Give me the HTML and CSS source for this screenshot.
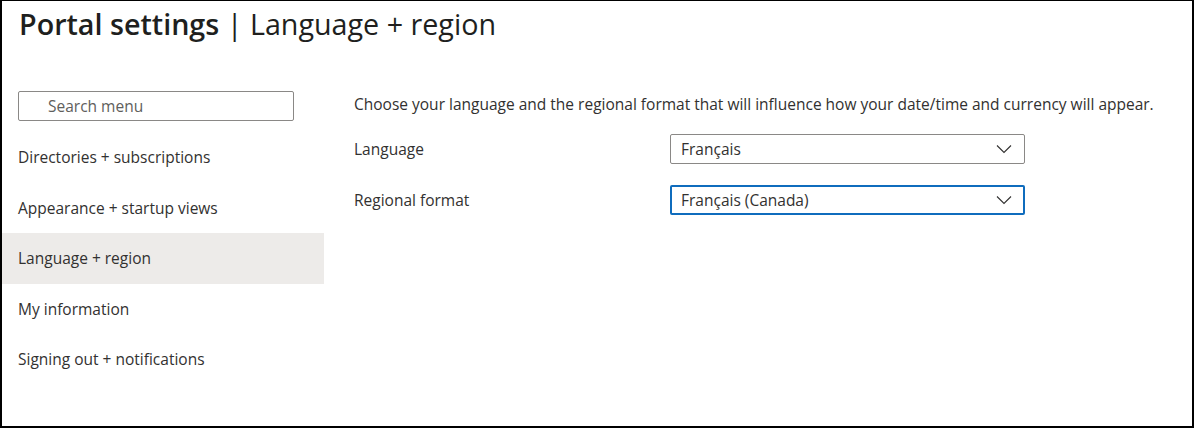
FILE: index.html
```html
<!DOCTYPE html>
<html lang="en">
<head>
<meta charset="utf-8">
<title>Portal settings | Language + region</title>
<link rel="stylesheet" href="styles.css">
</head>
<body>
<div class="frame">
  <header class="header">
    <h1 class="title"><span class="title-main">Portal settings</span> | Language + region</h1>
  </header>
  <div class="layout">
    <nav class="sidebar">
      <div class="search">
        <span class="search-placeholder">Search menu</span>
      </div>
      <ul class="menu">
        <li class="menu-item">Directories + subscriptions</li>
        <li class="menu-item">Appearance + startup views</li>
        <li class="menu-item is-selected">Language + region</li>
        <li class="menu-item">My information</li>
        <li class="menu-item">Signing out + notifications</li>
      </ul>
    </nav>
    <main class="content">
      <p class="intro">Choose your language and the regional format that will influence how your date/time and currency will appear.</p>
      <div class="field">
        <label class="field-label">Language</label>
        <div class="dropdown">
          <span class="dropdown-value">Français</span>
          <svg class="chevron" width="16" height="10" viewBox="0 0 16 10"><path d="M1 1.5 L8 8.5 L15 1.5" fill="none" stroke="#323130" stroke-width="1.1"/></svg>
        </div>
      </div>
      <div class="field">
        <label class="field-label">Regional format</label>
        <div class="dropdown is-focused">
          <span class="dropdown-value">Français (Canada)</span>
          <svg class="chevron" width="16" height="10" viewBox="0 0 16 10"><path d="M1 1.5 L8 8.5 L15 1.5" fill="none" stroke="#323130" stroke-width="1.1"/></svg>
        </div>
      </div>
    </main>
  </div>
</div>
</body>
</html>
```

FILE: styles.css
```css
* { box-sizing: border-box; }
html, body { margin: 0; padding: 0; background: #fff; }
body {
  font-family: "Open Sans", "Noto Sans", sans-serif;
  color: #323130;
}
.frame {
  width: 1194px;
  height: 428px;
  border-style: solid;
  border-color: #000;
  border-width: 1px 2px 2px 2px;
  background: #fff;
  overflow: hidden;
}
.header { padding: 3px 0 0 17px; height: 90px; }
.title {
  margin: 0;
  font-size: 28.7px;
  font-weight: 400;
  line-height: 40px;
  color: #201f1e;
}
.title-main { font-weight: 600; }
.layout { display: grid; grid-template-columns: 322px 1fr; }
.sidebar { display: flex; flex-direction: column; }
.search {
  margin-left: 16px;
  width: 276px;
  height: 30px;
  border: 1px solid #8a8886;
  border-radius: 2px;
  padding-left: 29px;
  display: flex;
  align-items: center;
}
.search-placeholder { font-size: 15.5px; color: #605e5c; }
.menu { list-style: none; margin: 11px 0 0; padding: 0; }
.menu-item {
  height: 50.5px;
  display: flex;
  align-items: center;
  padding-left: 16px;
  font-size: 15.5px;
}
.menu-item.is-selected { background: #edebe9; }
.content { padding: 3px 0 0 30px; }
.intro { margin: 0 0 20px; font-size: 15.5px; line-height: 20px; }
.field { display: flex; align-items: center; margin-bottom: 21px; }
.field-label { width: 316px; font-size: 15.5px; }
.dropdown {
  width: 355px;
  height: 30px;
  border: 1px solid #8a8886;
  border-radius: 2px;
  display: flex;
  align-items: center;
  justify-content: space-between;
  padding: 0 12px 0 10px;
}
.dropdown.is-focused { border: 2px solid #0f6cbd; padding: 0 11px 0 9px; }
.dropdown-value { font-size: 15.5px; }
.chevron { display: block; }
```
